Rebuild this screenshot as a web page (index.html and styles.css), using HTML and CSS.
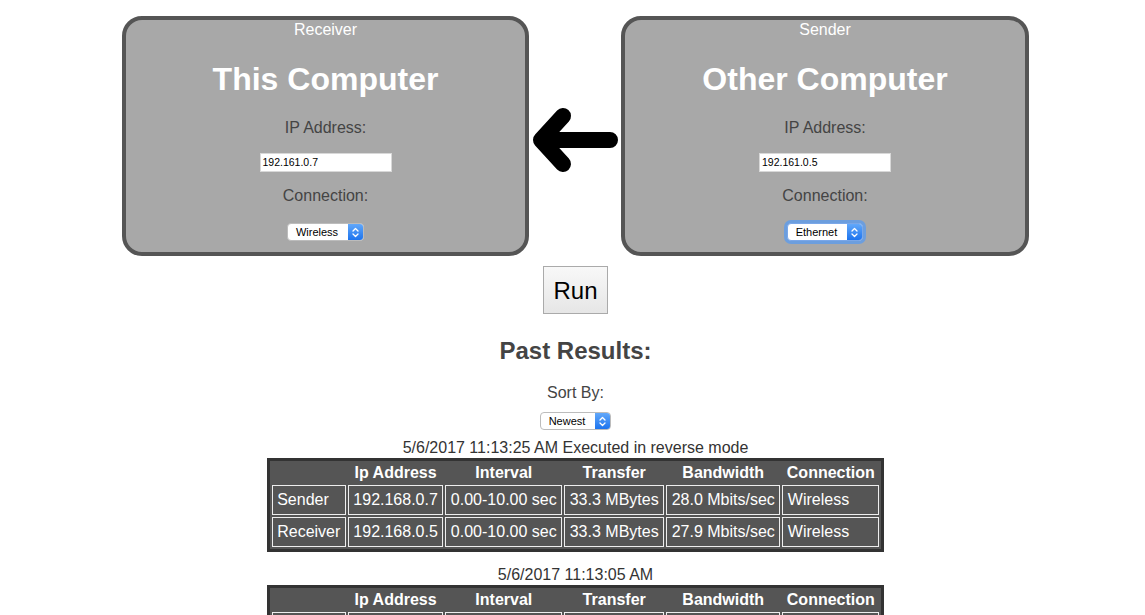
FILE: index.html
```html
<!DOCTYPE html>
<html>
<head>
<meta charset="utf-8">
<title>Network Test</title>
<link rel="stylesheet" href="styles.css">
</head>
<body>
<div class="page">
  <div class="computers">
    <div class="panel">
      <div class="role">Receiver</div>
      <h1 class="title">This Computer</h1>
      <div class="label">IP Address:</div>
      <div class="input">192.161.0.7</div>
      <div class="label label-conn">Connection:</div>
      <div class="select">
        <span class="sel-text">Wireless</span>
        <span class="sel-btn"><svg width="7" height="11" viewBox="0 0 7 11"><path d="M1 4 L3.5 1.5 L6 4 M1 7 L3.5 9.5 L6 7" fill="none" stroke="#fff" stroke-width="1.3" stroke-linecap="round" stroke-linejoin="round"/></svg></span>
      </div>
    </div>
    <div class="arrow">
      <svg width="92" height="240" viewBox="0 0 92 240"><path d="M34 100 L12 124 L34 148 M12 124 L81 124" fill="none" stroke="#000" stroke-width="16" stroke-linecap="round" stroke-linejoin="round"/></svg>
    </div>
    <div class="panel panel-right">
      <div class="role">Sender</div>
      <h1 class="title">Other Computer</h1>
      <div class="label">IP Address:</div>
      <div class="input">192.161.0.5</div>
      <div class="label label-conn">Connection:</div>
      <div class="select focused">
        <span class="sel-text">Ethernet</span>
        <span class="sel-btn"><svg width="7" height="11" viewBox="0 0 7 11"><path d="M1 4 L3.5 1.5 L6 4 M1 7 L3.5 9.5 L6 7" fill="none" stroke="#fff" stroke-width="1.3" stroke-linecap="round" stroke-linejoin="round"/></svg></span>
      </div>
    </div>
  </div>

  <button class="run">Run</button>

  <h2 class="past">Past Results:</h2>
  <div class="sort-label">Sort By:</div>
  <div class="select">
    <span class="sel-text">Newest</span>
    <span class="sel-btn"><svg width="7" height="11" viewBox="0 0 7 11"><path d="M1 4 L3.5 1.5 L6 4 M1 7 L3.5 9.5 L6 7" fill="none" stroke="#fff" stroke-width="1.3" stroke-linecap="round" stroke-linejoin="round"/></svg></span>
  </div>

  <div class="result">
    <div class="caption">5/6/2017 11:13:25 AM Executed in reverse mode</div>
    <table class="results">
      <tr><th></th><th>Ip Address</th><th>Interval</th><th>Transfer</th><th>Bandwidth</th><th>Connection</th></tr>
      <tr><td>Sender</td><td>192.168.0.7</td><td>0.00-10.00 sec</td><td>33.3 MBytes</td><td>28.0 Mbits/sec</td><td>Wireless</td></tr>
      <tr><td>Receiver</td><td>192.168.0.5</td><td>0.00-10.00 sec</td><td>33.3 MBytes</td><td>27.9 Mbits/sec</td><td>Wireless</td></tr>
    </table>
  </div>

  <div class="result">
    <div class="caption">5/6/2017 11:13:05 AM</div>
    <table class="results">
      <tr><th></th><th>Ip Address</th><th>Interval</th><th>Transfer</th><th>Bandwidth</th><th>Connection</th></tr>
      <tr><td>Sender</td><td>192.168.0.7</td><td>0.00-10.00 sec</td><td>33.1 MBytes</td><td>27.8 Mbits/sec</td><td>Wireless</td></tr>
      <tr><td>Receiver</td><td>192.168.0.5</td><td>0.00-10.00 sec</td><td>33.1 MBytes</td><td>27.7 Mbits/sec</td><td>Wireless</td></tr>
    </table>
  </div>
</div>
</body>
</html>
```

FILE: styles.css
```css
html, body {
  margin: 0;
  padding: 0;
  background: #fff;
}
body {
  font-family: "Liberation Sans", Arial, Helvetica, sans-serif;
  color: #444;
  font-size: 16px;
}
.page {
  display: flex;
  flex-direction: column;
  align-items: center;
  padding: 16px 0 40px 6px;
}
.computers {
  display: flex;
  align-items: flex-start;
}
.panel {
  box-sizing: border-box;
  width: 407px;
  height: 240px;
  border: 4px solid #555;
  border-radius: 20px;
  background: #a8a8a8;
  display: flex;
  flex-direction: column;
  align-items: center;
}
.panel-right {
  width: 408px;
}
.arrow {
  width: 92px;
  height: 240px;
}
.arrow svg {
  display: block;
}
.role {
  color: #fff;
  font-size: 16px;
  line-height: 18px;
  padding-top: 1px;
}
.title {
  margin: 22px 0 0;
  color: #fff;
  font-size: 32px;
  font-weight: bold;
  line-height: 37px;
}
.label {
  margin-top: 21px;
  font-size: 16px;
  line-height: 18px;
  color: #444;
}
.label-conn {
  margin-top: 15px;
}
.input {
  box-sizing: border-box;
  margin-top: 16px;
  width: 132px;
  height: 19px;
  background: #fff;
  border: 1px solid #d8d8d8;
  font-size: 10.5px;
  line-height: 17px;
  padding-left: 2px;
  color: #000;
}
.select {
  box-sizing: border-box;
  margin-top: 18px;
  height: 18px;
  display: flex;
  align-items: stretch;
  background: #fff;
  border: 1px solid #bcbcbc;
  border-radius: 4px;
  overflow: hidden;
}
.select.focused {
  box-shadow: 0 0 0 3px rgba(88, 155, 240, 0.75);
  border-color: #7aa7e8;
}
.sel-text {
  font-size: 11px;
  line-height: 16px;
  color: #000;
  padding: 0 10px 0 8px;
}
.sel-btn {
  width: 15px;
  background: linear-gradient(#62a8fa, #1d74ee);
  display: flex;
  align-items: center;
  justify-content: center;
}
.run {
  margin-top: 10px;
  width: 65px;
  height: 48px;
  font-family: "Liberation Sans", Arial, Helvetica, sans-serif;
  font-size: 24px;
  line-height: 28px;
  padding: 2px 0 0;
  color: #000;
  background: linear-gradient(#f8f8f8, #e6e6e6);
  border: 1px solid #aaa;
  border-radius: 0;
}
.past {
  margin: 23px 0 0;
  font-size: 24px;
  line-height: 28px;
  font-weight: bold;
  color: #444;
}
.sort-label {
  margin-top: 19px;
  line-height: 18px;
  color: #444;
}
.sort-label + .select {
  margin-top: 10px;
}
.result {
  display: flex;
  flex-direction: column;
  align-items: center;
  margin-top: 9px;
}
.result + .result {
  margin-top: 14px;
}
.caption {
  font-size: 16px;
  line-height: 18px;
  color: #333;
  margin-bottom: 1px;
}
.results {
  border: 3px solid #333;
  background: #555;
  border-spacing: 2px;
  color: #fff;
  font-size: 16px;
}
.results th {
  font-weight: bold;
  padding: 1px 4.5px 1px;
  line-height: 18px;
  text-align: center;
}
.results td {
  border: 1px solid #eee;
  padding: 5px 4.5px 5px 4.5px;
  line-height: 18px;
  text-align: left;
}
```
